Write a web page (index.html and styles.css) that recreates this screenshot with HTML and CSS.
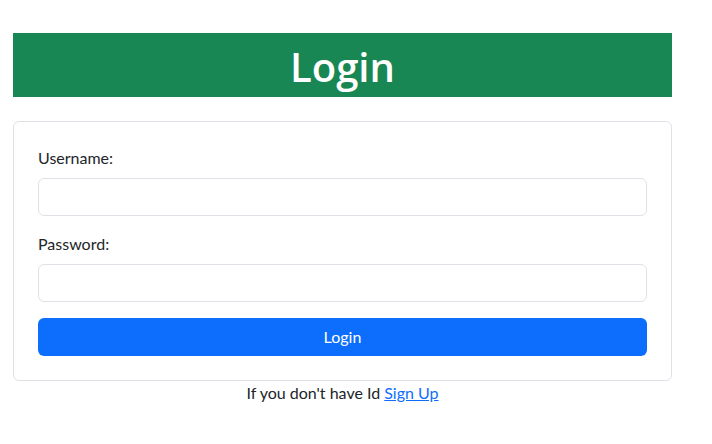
FILE: index.html
```html
<!DOCTYPE html>
<html lang="en">
<head>
<meta charset="utf-8">
<title>Login</title>
<link rel="stylesheet" href="styles.css">
</head>
<body>
<main class="page">
  <h1 class="banner">Login</h1>
  <form class="card">
    <div class="field">
      <label class="label" for="username">Username:</label>
      <input class="input" id="username" type="text">
    </div>
    <div class="field">
      <label class="label" for="password">Password:</label>
      <input class="input" id="password" type="password">
    </div>
    <button class="btn" type="button">Login</button>
  </form>
  <p class="note">If you don't have Id <a href="#" class="link">Sign Up</a></p>
</main>
</body>
</html>
```
FILE: styles.css
```css
* { box-sizing: border-box; }
html, body { margin: 0; padding: 0; background: #fff; }
body {
  font-family: Lato, "Open Sans", "Liberation Sans", sans-serif;
  font-size: 16px;
  line-height: 24px;
  color: #212529;
}
.page {
  width: 659px;
  margin-left: 13px;
  padding-top: 33px;
}
.banner {
  margin: 0 0 24px;
  background: #198754;
  color: #fff;
  text-align: center;
  font-family: "Open Sans", Lato, sans-serif;
  font-size: 40px;
  line-height: 48px;
  font-weight: 600;
  padding: 10px 0 6px;
}
.card {
  border: 1px solid #dee2e6;
  border-radius: 6px;
  padding: 24px;
  display: flex;
  flex-direction: column;
  gap: 16px;
  margin: 0;
}
.field { display: flex; flex-direction: column; gap: 8px; }
.label { display: block; }
.input {
  height: 38px;
  border: 1px solid #dee2e6;
  border-radius: 6px;
  padding: 6px 12px;
  font: inherit;
  background: #fff;
}
.btn {
  height: 38px;
  border: 0;
  border-radius: 6px;
  background: #0d6efd;
  color: #fff;
  font: inherit;
  cursor: pointer;
}
.note {
  margin: 0;
  text-align: center;
}
.link { color: #0d6efd; text-decoration: underline; }
```
